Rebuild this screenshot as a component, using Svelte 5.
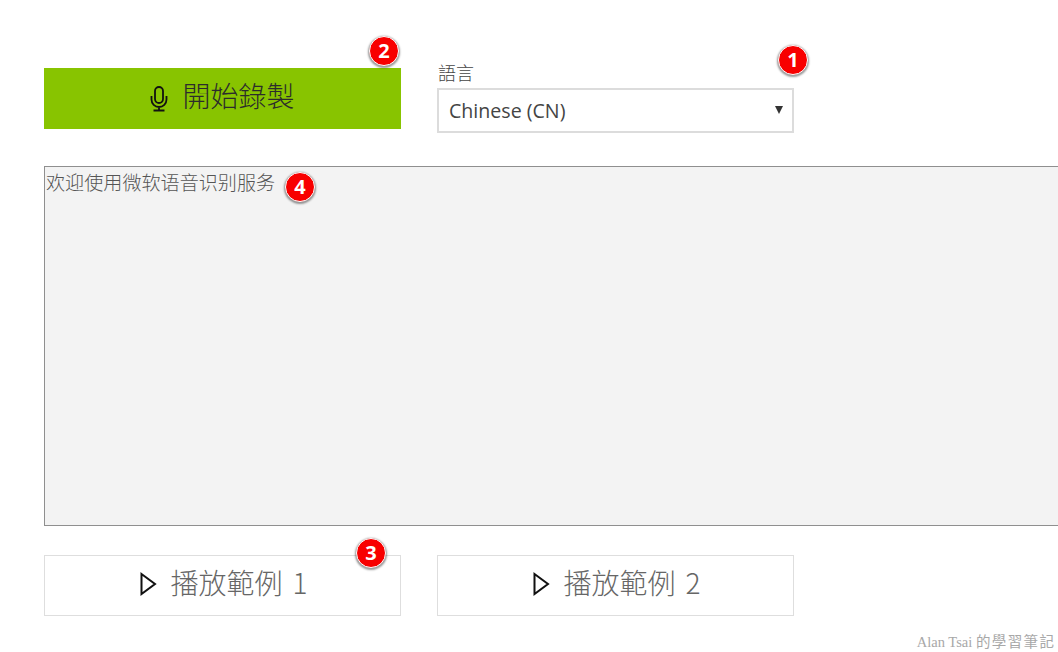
<script>
  let language = $state("Chinese (CN)");
  const samples = ["播放範例 1", "播放範例 2"];
</script>

{#snippet badge(n, cls)}
  <span class="badge {cls}">{n}</span>
{/snippet}

{#snippet playIcon()}
  <svg class="play" width="17" height="24" viewBox="0 0 17 24" aria-hidden="true">
    <path d="M1.5 2 L15 12 L1.5 22 Z" fill="none" stroke="#111" stroke-width="2" stroke-linejoin="miter" />
  </svg>
{/snippet}

<main class="page">
  <section class="top">
    <div class="record-cell">
      <button class="btn record">
        <svg class="mic" width="18" height="26" viewBox="0 0 18 26" aria-hidden="true">
          <rect x="5" y="1" width="8" height="16" rx="4" fill="none" stroke="#111" stroke-width="1.8" />
          <path d="M1.5 10v3.5a7.5 7.5 0 0 0 15 0V10M9 21v3M3.5 24.5h11" fill="none" stroke="#111" stroke-width="1.8" />
        </svg>
        <span class="txt">開始錄製</span>
      </button>
      {@render badge(2, "b2")}
    </div>
    <div class="lang-cell">
      <label for="lang">語言</label>
      <div class="select">
        <select id="lang" bind:value={language}>
          <option>Chinese (CN)</option>
          <option>English (US)</option>
        </select>
        <span class="caret"></span>
      </div>
      {@render badge(1, "b1")}
    </div>
  </section>

  <section class="output">
    <div class="result">欢迎使用微软语音识别服务</div>
    {@render badge(4, "b4")}
  </section>

  <section class="samples">
    {#each samples as s, i}
      <div class="sample-cell">
        <button class="btn sample">
          {@render playIcon()}
          <span class="txt">{s}</span>
        </button>
        {#if i == 0}
          {@render badge(3, "b3")}
        {/if}
      </div>
    {/each}
  </section>

  <span class="mark">Alan Tsai <span class="mark-cjk">的學習筆記</span></span>
</main>

<style>
  :global(body) {
    margin: 0;
    background: #fff;
    overflow: hidden;
  }
  .page {
    position: relative;
    width: 1058px;
    height: 652px;
    overflow: hidden;
    box-sizing: border-box;
    padding: 0 0 0 44px;
    font-family: "Open Sans", "Noto Sans CJK TC", sans-serif;
    color: #333;
  }
  .top {
    display: grid;
    grid-template-columns: 357px 357px;
    column-gap: 36px;
    padding-top: 63px;
    height: 166px;
    box-sizing: border-box;
  }
  .record-cell,
  .lang-cell,
  .sample-cell,
  .output {
    position: relative;
  }
  .record-cell {
    padding-top: 5px;
  }
  .btn {
    display: flex;
    align-items: center;
    justify-content: center;
    width: 357px;
    height: 61px;
    box-sizing: border-box;
    padding: 0;
    border: 0;
    cursor: pointer;
    font-family: "Noto Sans CJK TC", sans-serif;
    font-weight: 300;
    font-size: 28px;
  }
  .txt {
    position: relative;
    top: -4px;
  }
  .record {
    background: #88c400;
    color: #2c2c2c;
    gap: 14px;
  }
  .sample {
    background: #fff;
    border: 1px solid #dedede;
    color: #666;
    gap: 13px;
    padding-left: 3px;
    word-spacing: 4px;
  }
  .play {
    position: relative;
    top: -2px;
  }
  label {
    display: block;
    height: 25px;
    padding-left: 1px;
    font-family: "Noto Sans CJK TC", sans-serif;
    font-weight: 300;
    font-size: 18px;
    line-height: 18px;
    color: #444;
  }
  .select {
    position: relative;
    width: 357px;
    height: 45px;
  }
  select {
    display: block;
    width: 100%;
    height: 100%;
    box-sizing: border-box;
    appearance: none;
    background: #fff;
    border: 2px solid #dcdcdc;
    border-radius: 0;
    padding: 0 0 0 10px;
    font-family: "Open Sans", sans-serif;
    font-size: 19.6px;
    color: #444;
  }
  .caret {
    position: absolute;
    right: 11px;
    top: 18px;
    border-left: 4px solid transparent;
    border-right: 4px solid transparent;
    border-top: 8px solid #333;
    pointer-events: none;
  }
  .result {
    width: 1100px;
    height: 360px;
    box-sizing: border-box;
    background: #f3f3f3;
    border: 1px solid #8f8f8f;
    padding: 2px 1px;
    font-family: "Noto Sans CJK SC", sans-serif;
    font-weight: 300;
    font-size: 19.1px;
    line-height: 26px;
    color: #555;
  }
  .samples {
    display: grid;
    grid-template-columns: 357px 357px;
    column-gap: 36px;
    margin-top: 29px;
  }
  .badge {
    position: absolute;
    width: 28px;
    height: 28px;
    border-radius: 50%;
    background: #f80000;
    border: 1px solid #fff;
    box-shadow: 0 1px 2px 1px rgba(0, 0, 0, 0.4);
    color: #fff;
    font-family: "Open Sans", sans-serif;
    font-weight: 700;
    font-size: 20px;
    line-height: 28px;
    text-align: center;
  }
  .b2 {
    left: 325px;
    top: -27px;
  }
  .b1 {
    left: 341px;
    top: -18px;
  }
  .b4 {
    left: 241px;
    top: 6px;
  }
  .b3 {
    left: 312px;
    top: -17px;
  }
  .mark {
    position: absolute;
    right: 4px;
    top: 630px;
    white-space: nowrap;
    font-family: "Liberation Serif", "Noto Sans CJK TC", serif;
    font-size: 14.5px;
    color: #a8a8a8;
  }
  .mark-cjk {
    letter-spacing: 1.4px;
    margin-right: -1.4px;
  }
</style>
